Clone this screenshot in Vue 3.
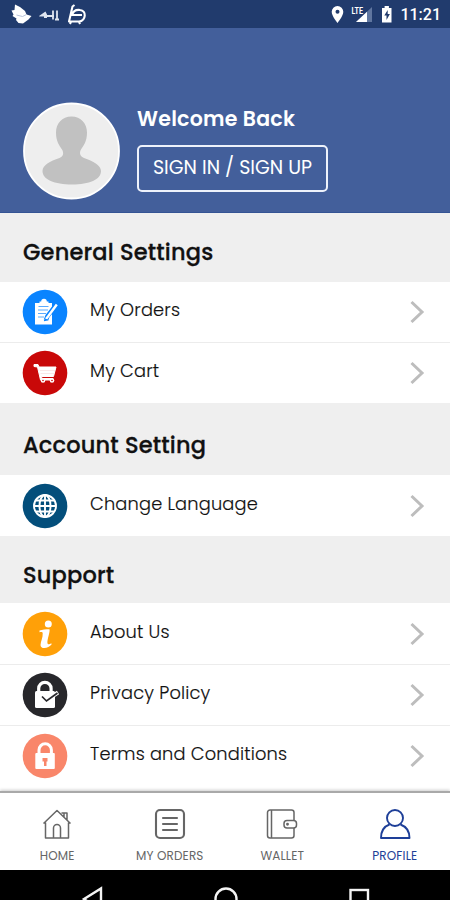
<script setup>
import { ref } from "vue";

const sections = [
    {
        title: "General Settings",
        key: "general",
        items: [
            { key: "orders", label: "My Orders", color: "#0a84ff" },
            { key: "cart", label: "My Cart", color: "#c90808" },
        ],
    },
    {
        title: "Account Setting",
        key: "account",
        items: [{ key: "language", label: "Change Language", color: "#034e7b" }],
    },
    {
        title: "Support",
        key: "support",
        items: [
            { key: "about", label: "About Us", color: "#ffa008" },
            { key: "privacy", label: "Privacy Policy", color: "#27272b" },
            { key: "terms", label: "Terms and Conditions", color: "#f9866a" },
        ],
    },
];

const tabs = [
    { key: "home", label: "HOME" },
    { key: "list", label: "MY ORDERS" },
    { key: "wallet", label: "WALLET" },
    { key: "profile", label: "PROFILE" },
];

const activeTab = ref("profile");
</script>

<template>
    <div class="screen">
        <!-- status bar -->
        <div class="status">
            <svg width="90" height="28" viewBox="0 0 90 28">
                <path d="M15 4.500l5 2.500 5 4 1.500 3.500 5 1.500-3 3.500-5.500 4-4.500-.5-2.500-3 .5-1.500-4-2.500 1-1.500-2-4 3-.5z" fill="#fff" />
                <path d="M16.500 15l6 1.500 4-2" fill="none" stroke="#b9c4db" stroke-width="1" />
                <path d="M39 16l6.500-4.500 1.500 3v3.500h-3v-1.500h-4.500z" fill="#dfe5f0" />
                <path d="M47 16h7M53 10.500v9M55 19.500h4M57 10.500v9" fill="none" stroke="#dfe5f0" stroke-width="1.800" />
                <path d="M74.500 5l-2 1.500-3.500 15h10c7-1 8-11 1-11.500-4-.5-7 1.500-8 5h10M71 21.500l-1 2.500m9-2.500l1 2.500" fill="none" stroke="#fff" stroke-width="2.100" stroke-linejoin="round" />
            </svg>
            <div class="status__right">
                <svg width="64" height="28" viewBox="0 0 64 28">
                    <path d="M8.500 6a5.800 5.800 0 0 0-5.800 5.800C2.700 16.100 8.500 23 8.500 23s5.800-6.900 5.800-11.200A5.800 5.800 0 0 0 8.500 6z" fill="#fff" />
                    <circle cx="8.500" cy="11.800" r="2" fill="#213b6d" />
                    <path d="M27 22L43 7v15z" fill="#60769f" />
                    <path d="M27 22L38 11.700V22z" fill="#fff" />
                    <text x="22.500" y="13.500" textLength="11.500" lengthAdjust="spacingAndGlyphs" class="status__lte">LTE</text>
                    <path d="M53 8h2.600V6h4.300v2h2.600v14.500H53z" fill="#fff" />
                    <path d="M58.700 10l-3.400 5.500h2.200V20l3.400-6h-2.200z" fill="#213b6d" />
                </svg>
                <span class="status__time">11:21</span>
            </div>
        </div>

        <!-- account header -->
        <header class="hero">
            <svg class="hero__avatar" width="98" height="98" viewBox="-.5 0 98 98">
                <circle cx="49" cy="49" r="47.500" fill="#eee" stroke="#fff" stroke-width="1.800" />
                <path
                    d="M49 14.500c-9.500 0-15.500 7-15.500 16 0 9 3.500 13 6 17 2 3.500 1.500 7-2.500 8.500-9.500 3-17 7.500-17 13 0 8.500 12 13.500 29.500 13.500S78.500 77.500 78.500 69c0-5.500-8-10-17-13-4-1.500-5-5-3-8.500 2.500-4 6-8 6-17 0-9-6-16-15.500-16z"
                    fill="#c1c1c1" />
            </svg>
            <div class="hero__body">
                <div class="hero__title">Welcome Back</div>
                <button class="hero__button">SIGN IN / SIGN UP</button>
            </div>
        </header>

        <!-- settings -->
        <main class="list">
            <section v-for="section in sections" :key="section.key">
                <h2 class="list__title" :class="`list__title--${section.key}`">{{ section.title }}</h2>
                <div v-for="item in section.items" :key="item.key" class="row" :class="`row--${item.key}`">
                    <svg class="row__icon" width="46" height="46" viewBox="0 0 46 46">
                        <circle cx="23" cy="23" r="22.300" :fill="item.color" />
                        <g v-if="item.key === 'orders'">
                            <path d="M13 14h4.500v-1.500h1.700a2.800 2.800 0 0 1 5.600 0h1.700V14H30v21.500H13z" fill="#fff" />
                            <path d="M16.500 17.500h10M16 21h10M16 24.500h8M16 28h6" stroke="#5aabff" stroke-width="1.200" />
                            <path d="M34.500 15.500L25.500 27l-1.500 4" stroke="#0a84ff" stroke-width="4.500" fill="none" />
                            <path d="M34.800 15.500L26 27.500l-2 2.500" stroke="#fff" stroke-width="2.400" fill="none" />
                            <path d="M22 31.500l3-.8" stroke="#0a84ff" stroke-width="1.500" />
                        </g>
                        <g v-else-if="item.key === 'cart'">
                            <path d="M12 14.500h4l1 2.500H34l-2.500 9.500H19.500l.5 2H31v1.500H18.500L15.500 17 12 16.500z" fill="#fff" stroke="#fff" stroke-width="1" />
                            <path d="M18 20.500h15M18.500 23.500h14" stroke="#efc6c6" stroke-width=".4" />
                            <circle cx="21" cy="30.500" r="2.300" fill="#fff" />
                            <circle cx="30" cy="30.500" r="2.300" fill="#fff" />
                            <circle cx="21" cy="30.500" r=".8" :fill="item.color" />
                            <circle cx="30" cy="30.500" r=".8" :fill="item.color" />
                        </g>
                        <g v-else-if="item.key === 'language'" fill="none" stroke="#fff" stroke-width="1.900">
                            <circle cx="23" cy="23" r="11" />
                            <ellipse cx="23" cy="23" rx="5.500" ry="11" />
                            <path d="M12 23h22M23 12v22M14 17.500h18M14 28.500h18" />
                        </g>
                        <g v-else-if="item.key === 'about'" fill="#fff">
                            <circle cx="26.300" cy="13" r="3.500" />
                            <path d="M17.500 19.500c3-.9 6-1.200 10-1.200.7 3-2.300 9.700-2.100 13.400.2 2 2 2.200 3.800.6l.5.900c-3 4.500-11.400 5.300-11.200.7.100-3.200 2.500-7.500 2.200-11.700-.2-1.500-1.700-1-3.200-1z" />
                        </g>
                        <g v-else-if="item.key === 'privacy'">
                            <path d="M16.700 20v-3.500a6.200 6.200 0 0 1 12.400 0V20" fill="none" stroke="#fff" stroke-width="3.200" />
                            <rect x="13" y="19" width="20" height="17" rx="1.500" fill="#fff" />
                            <path d="M24.500 28L36 20.500" fill="none" stroke="#fff" stroke-width="4" />
                            <path d="M20 24.500l4.500 4.500 11-8" fill="none" stroke="#27272b" stroke-width="1.700" />
                        </g>
                        <g v-else>
                            <path d="M17 21v-4a6.200 6.200 0 0 1 12.400 0v4" fill="none" stroke="#fff" stroke-width="3" />
                            <rect x="13.300" y="20" width="19.500" height="16" rx="1" fill="#fff" />
                            <path d="M20.500 25h5v3.500h-1V33h-2.500v-4.500h-1.500z" :fill="item.color" />
                        </g>
                    </svg>
                    <span class="row__label">{{ item.label }}</span>
                    <svg class="row__arrow" width="16" height="24" viewBox="0 0 16 24">
                        <path d="M2.500 2L13 12 2.500 22" fill="none" stroke="#bdbdbd" stroke-width="3" />
                    </svg>
                </div>
            </section>
        </main>

        <!-- bottom tabs -->
        <nav class="tabs">
            <div
                v-for="tab in tabs"
                :key="tab.key"
                class="tab"
                :class="{ 'tab--active': tab.key === activeTab }"
                @click="activeTab = tab.key">
                <svg width="32" height="32" viewBox="0 0 32 32" fill="none" stroke="currentColor" stroke-linejoin="round">
                    <g v-if="tab.key === 'home'" stroke-width="1.500">
                        <path d="M4.500 14.500v15.500h23V14.500M2.500 15.500L16 2.500l13.500 13M20.500 5h5.500v7M12.500 30V20a3.500 3.500 0 0 1 7 0v10M23 5v4" />
                    </g>
                    <g v-else-if="tab.key === 'list'" stroke-width="2.100" stroke-linecap="round">
                        <rect x="2" y="2" width="28" height="28" rx="4" />
                        <path d="M9 10h14M9 16h14M9 22h14" />
                    </g>
                    <g v-else-if="tab.key === 'wallet'" stroke-width="1.500">
                        <path d="M28 12V4.500A2.500 2.500 0 0 0 25.500 2H4a2.500 2.500 0 0 0-2.500 2.500v23A2.500 2.500 0 0 0 4 30h21.500a2.500 2.500 0 0 0 2.500-2.500V20M5.500 2v28" />
                        <rect x="18" y="12.500" width="12.500" height="7.500" rx="3" />
                        <circle cx="21.500" cy="16.200" r=".7" />
                    </g>
                    <g v-else stroke-width="1.900">
                        <circle cx="16" cy="10" r="8" />
                        <path d="M10.500 16.500C5 18.500 2 23 2 30h28.500c0-7-3.500-11.500-9-13.500" />
                    </g>
                </svg>
                <span class="tab__label">{{ tab.label }}</span>
            </div>
        </nav>

        <!-- system navigation -->
        <div class="system">
            <svg width="450" height="30" viewBox="0 0 450 30" fill="none" stroke="#f4f4f4" stroke-width="2.400">
                <path d="M101 18.500v22L84 29z" />
                <circle cx="226" cy="29" r="10.500" />
                <rect x="350.500" y="20" width="17.500" height="20" />
            </svg>
        </div>
    </div>
</template>

<style>
body {
    background: #fff;
}
</style>

<style scoped>
.screen {
    width: 450px;
    height: 900px;
    display: flex;
    flex-direction: column;
    overflow: hidden;
    font-family: Poppins, Inter, "Open Sans", sans-serif;
    background: #fff;
    color: #111;
}

.status {
    height: 28px;
    flex: none;
    display: flex;
    justify-content: space-between;
    background: #213b6d;
}

.status__right {
    display: flex;
    align-items: center;
    padding-right: 9px;
}

.status__lte {
    font: bold 9px Roboto, sans-serif;
    fill: #fff;
}

.status__time {
    margin-left: 7px;
    color: #fff;
    font: 500 16px/28px Roboto, sans-serif;
    padding-top: 2px;
}

.hero {
    height: 185px;
    flex: none;
    box-sizing: border-box;
    display: flex;
    padding: 74px 0 0 22px;
    background: #435f9b;
    border-bottom: 1px solid #345494;
    color: #fff;
}

.hero__avatar {
    flex: none;
}

.hero__body {
    padding: 3px 0 0 17px;
}

.hero__title {
    font-size: 20.500px;
    font-weight: 600;
    line-height: 28px;
    letter-spacing: 0.25px;
}

.hero__button {
    display: block;
    width: 191px;
    height: 47px;
    margin-top: 12px;
    padding: 0 0 3px;
    border: 2px solid #eef2fb;
    border-radius: 5px;
    background: transparent;
    color: #fff;
    font: inherit;
    font-size: 19px;
    white-space: nowrap;
}

.list {
    height: 578px;
    flex: none;
}

.list__title {
    height: 69px;
    box-sizing: border-box;
    margin: 0;
    padding: 19px 0 0 23px;
    background: #efefef;
    font-size: 22.500px;
    font-weight: 500;
    line-height: 40px;
    letter-spacing: 0.18px;
    -webkit-text-stroke: 0.3px #111;
}

.list__title--account {
    height: 72px;
    padding-top: 22px;
}

.list__title--support {
    height: 67px;
    padding-top: 19px;
}

.row {
    height: 61px;
    box-sizing: border-box;
    display: flex;
    align-items: center;
    padding: 0 25px 1px 22px;
}

.row--orders {
    height: 60px;
}

.row--language,
.row--about {
    padding-bottom: 0;
}

.row + .row {
    border-top: 1px solid #ececec;
}

.row__icon {
    flex: none;
}

.row__label {
    flex: 1;
    padding: 0 0 4px 22px;
    font-size: 17.800px;
    font-weight: 300;
    line-height: 26px;
    letter-spacing: 0.18px;
    white-space: nowrap;
    -webkit-text-stroke: 0.15px #111;
}

.tabs {
    height: 79px;
    flex: none;
    box-sizing: border-box;
    display: flex;
    padding-left: 1px;
    border-top: 2px solid #a9a9a9;
    box-shadow: 0 -1px 3px rgba(0, 0, 0, 0.2);
    background: #fff;
}

.tab {
    width: 112.500px;
    flex: none;
    display: flex;
    flex-direction: column;
    align-items: center;
    padding-top: 15px;
    color: #666;
}

.tab--active {
    color: #1e3f98;
}

.tab__label {
    margin-top: 8px;
    font-size: 12px;
    line-height: 16px;
    letter-spacing: 0.15px;
    white-space: nowrap;
}

.system {
    height: 30px;
    flex: none;
    background: #000;
}
</style>
